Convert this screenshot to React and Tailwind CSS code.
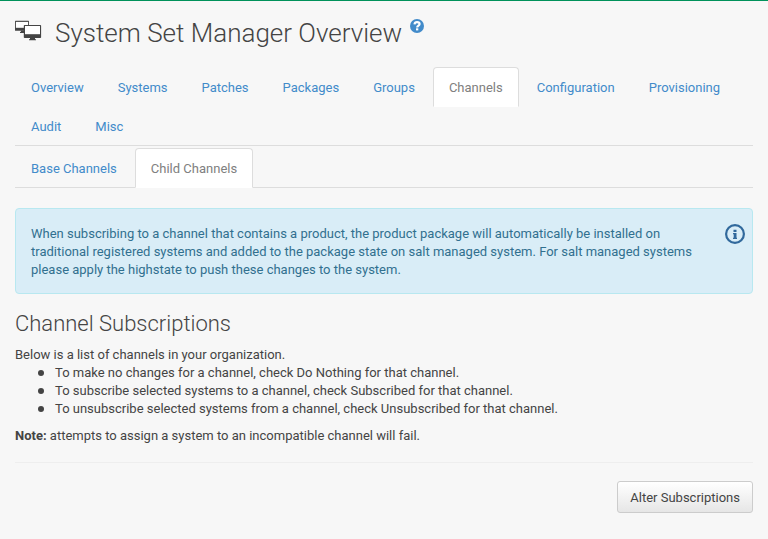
const tabs = ['Overview', 'Systems', 'Patches', 'Packages', 'Groups', 'Channels', 'Configuration', 'Provisioning', 'Audit', 'Misc'];
const subTabs = ['Base Channels', 'Child Channels'];
const instructions = [
  'To make no changes for a channel, check Do Nothing for that channel.',
  'To subscribe selected systems to a channel, check Subscribed for that channel.',
  'To unsubscribe selected systems from a channel, check Unsubscribed for that channel.',
];

function Tabs({ items, active, label }) {
  return (
    <nav aria-label={label} className="border-b border-[#dddddd]">
      <ul className="flex flex-wrap gap-x-[2px]">
        {items.map((item) => (
          <li key={item} className="-mb-px">
            <a
              href="#"
              aria-current={item === active ? 'page' : undefined}
              className={
                item === active
                  ? 'block rounded-t border border-[#dddddd] border-b-white bg-white px-[15px] pt-[11px] pb-[9px] text-[#808080]'
                  : 'block rounded-t border border-transparent px-[15px] pt-[11px] pb-[9px] text-[#428bca]'
              }
            >
              {item}
            </a>
          </li>
        ))}
      </ul>
    </nav>
  );
}

function SystemsIcon() {
  return (
    <svg width="27" height="26" viewBox="0 0 27 26" className="shrink-0" aria-hidden="true">
      <rect x="0" y="3.800" width="14" height="10" rx=".6" fill="#444" />
      <rect x=".9" y="4.900" width="12.200" height="5.900" fill="#fff" />
      <path d="M5.800 13.500H9V16H5v-1h.8z" fill="#444" />
      <rect x="8.800" y="7.900" width="17.300" height="13.200" rx=".8" fill="#444" />
      <rect x="10" y="9" width="15" height="8.200" fill="#fff" />
      <path d="M15 21h5v1.200h1v1h-7v-1h1z" fill="#444" />
    </svg>
  );
}

function HelpIcon() {
  return (
    <svg width="14" height="14" viewBox="0 0 14 14" aria-hidden="true">
      <circle cx="7" cy="7" r="7" fill="#428bca" />
      <path d="M4.500 5.300C4.700 3.700 5.700 3.200 7 3.200c1.500 0 2.600.7 2.600 1.900 0 1.500-2.400 1.500-2.400 3.300" fill="none" stroke="#fff" strokeWidth="2.200" />
      <path d="M6 9.300h2.300v2.100H6z" fill="#fff" />
    </svg>
  );
}

function InfoIcon() {
  return (
    <svg width="20" height="20" viewBox="0 0 20 20" className="shrink-0" aria-hidden="true">
      <circle cx="10" cy="10" r="8.900" fill="none" stroke="#31699c" strokeWidth="2.200" />
      <path d="M8.500 5.800h3v2.200h-3zM8 9h3.500v4.700h.5v1.300H8v-1.300h.7v-3.500H8z" fill="#31699c" />
    </svg>
  );
}

export default function App() {
  return (
    <main className="min-h-screen border-t border-[#00925b] bg-[#f7f7f7] px-[15px] pb-6 font-['Roboto',sans-serif] text-[13px] leading-[18px] text-[#444444]">
      <header className="flex items-start pt-4">
        <SystemsIcon />
        <h1 className="ml-[13px] text-[26px] leading-8 font-light">System Set Manager Overview</h1>
        <a href="#" aria-label="Help" className="mt-[2px] ml-2">
          <HelpIcon />
        </a>
      </header>
      <div className="mt-[18px] flex flex-col gap-[2px]">
        <Tabs items={tabs} active="Channels" label="Sections" />
        <Tabs items={subTabs} active="Child Channels" label="Channels" />
      </div>

      <section role="note" className="mt-5 flex items-start justify-between gap-6 rounded border border-[#b8e8f0] bg-[#d9edf7] pt-[15px] pr-[7px] pb-[14px] pl-[15px] text-[#31708f]">
        <p className="pt-px">
          When subscribing to a channel that contains a product, the product package will automatically be installed on
          traditional registered systems and added to the package state on salt managed system. For salt managed systems
          please apply the highstate to push these changes to the system.
        </p>
        <InfoIcon />
      </section>

      <h2 className="mt-4 text-[22px] leading-7 font-light">Channel Subscriptions</h2>
      <p className="mt-2">Below is a list of channels in your organization.</p>
      <ul className="pl-[23px]">
        {instructions.map((text) => (
          <li key={text} className="flex items-start gap-[11px]">
            <span aria-hidden="true" className="mt-[6px] size-[6px] shrink-0 rounded-full bg-[#444444]" />
            {text}
          </li>
        ))}
      </ul>
      <p className="mt-[9px]">
        <strong className="font-bold">Note:</strong> attempts to assign a system to an incompatible channel will fail.
      </p>
      <hr className="mt-[17px] border-[#eeeeee]" />
      <div className="mt-[18px] flex justify-end">
        <button type="button" className="rounded-[3px] border border-[#cccccc] bg-linear-to-b from-white to-[#e6e6e6] px-3 pt-[7px] pb-[5px]">
          Alter Subscriptions
        </button>
      </div>
    </main>
  );
}
